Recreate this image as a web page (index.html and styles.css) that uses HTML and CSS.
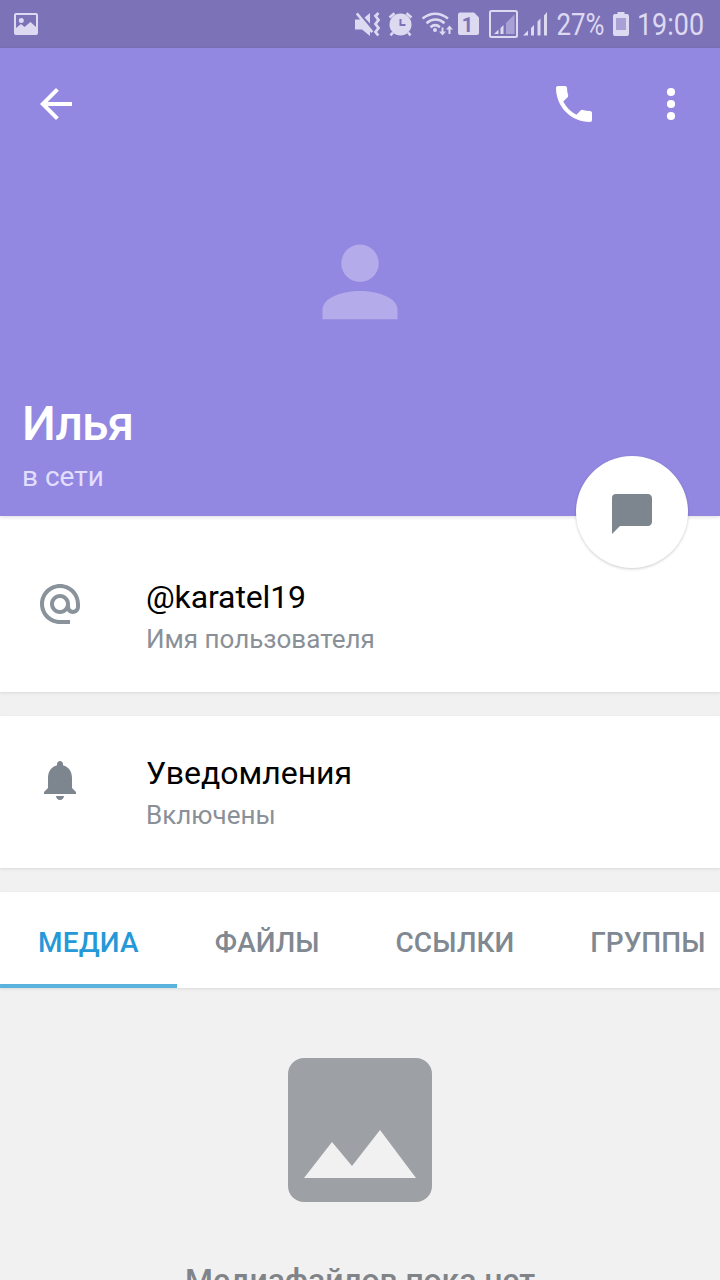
FILE: index.html
```html
<!DOCTYPE html>
<html lang="ru">
<head>
<meta charset="utf-8">
<title>Илья</title>
<link rel="stylesheet" href="styles.css">
</head>
<body>
<div class="screen">
  <div class="statusbar">
    <svg class="statusbar-icons" viewBox="0 0 720 48" width="720" height="48">
      <g fill="#ddd9f1">
        <path fill-rule="evenodd" d="M16 13h20a2 2 0 0 1 2 2v18a2 2 0 0 1-2 2H16a2 2 0 0 1-2-2V15a2 2 0 0 1 2-2zm0 2v13l5-4 3.500 3 6-5L36 27V15z"/>
        <circle cx="21.300" cy="20.500" r="2.500"/>
        <path d="M355 19.500h6.500l8.500 9.500v7l-8-6.500h-7zM364.500 17.500l5.500-4.500v10.500zM355.800 14.300l2-1.800 15.500 18.800-2 1.800z"/>
        <path d="M378.500 13l-3 3 3 4-3 4 3 4-3 4 2.800 3.500" fill="none" stroke="#ddd9f1" stroke-width="2.800"/>
        <path fill-rule="evenodd" d="M400.500 13.500a11 11 0 1 1 0 22 11 11 0 0 1 0-22zm-1 5.500v7h6v-2h-4v-5z"/>
        <path d="M389.500 17.500l5-4.200M411.500 17.500l-5-4.200M393 32.500l-2.500 2.800M408 32.500l2.500 2.800" fill="none" stroke="#ddd9f1" stroke-width="2.600"/>
        <g fill="none" stroke="#ddd9f1" stroke-width="2.500">
          <path d="M422.500 18.500c8-6.500 17.500-6.500 25.500 0M426.500 23.200c5.500-4.800 12.500-4.800 18 0M430.500 27.200c3-2.600 6.500-2.600 9.500 0"/>
        </g>
        <circle cx="435" cy="30" r="2"/>
        <path d="M441.500 27.500h2v4h2.500l-3.500 4-3.500-4h2.500zM448.500 34h2v-4.500h2.500l-3.500-4-3.500 4h2.500z"/>
        <path d="M460 12.500h14l5 5V33a2 2 0 0 1-2 2h-17a2 2 0 0 1-2-2V14.500a2 2 0 0 1 2-2z"/>
        <rect x="490" y="11" width="27" height="26" rx="1.500" fill="none" stroke="#ddd9f1" stroke-width="2"/>
        <path d="M494 34l4.500-4.500V34zM500.500 28l3-3v9h-3z"/>
        <path d="M506 23l8.500-8.500V34H506z" fill="#a9a1d6"/>
        <path d="M523 35.500l5-5v5zM531 28l3-3v10.500h-3zM537.500 21.500l3-3v17h-3zM544 15.500l3-3.500v23.500h-3z"/>
        <path fill-rule="evenodd" d="M617.500 12h7v2h2.500a2 2 0 0 1 2 2v18a2 2 0 0 1-2 2h-12a2 2 0 0 1-2-2V16a2 2 0 0 1 2-2h2.500z"/>
      </g>
      <path d="M616 18h10v12h-10z" fill="#a9a1d6"/>
      <text class="sim" x="467.500" y="32" text-anchor="middle">1</text>
      <text class="reading" x="556.500" y="35" textLength="48" lengthAdjust="spacingAndGlyphs">27%</text>
      <text class="reading" x="637" y="35" textLength="67" lengthAdjust="spacingAndGlyphs">19:00</text>
    </svg>
  </div>

  <header class="hero">
    <nav class="toolbar">
      <svg class="icon" viewBox="0 0 24 24"><path fill="#fff" d="M20 11H7.830l5.590-5.590L12 4l-8 8 8 8 1.410-1.410L7.830 13H20z"/></svg>
      <span class="spacer"></span>
      <svg class="icon" viewBox="0 0 24 24"><path fill="#fff" d="M6.620 10.790c1.440 2.830 3.760 5.140 6.590 6.590l2.200-2.200c.27-.27.67-.36 1.020-.24 1.120.37 2.330.57 3.570.57.55 0 1 .45 1 1V20c0 .55-.45 1-1 1-9.390 0-17-7.610-17-17 0-.55.45-1 1-1h3.500c.55 0 1 .45 1 1 0 1.250.2 2.450.57 3.570.11.35.03.74-.25 1.020l-2.200 2.200z"/></svg>
      <svg class="icon more" viewBox="0 0 48 48"><g fill="#fff"><circle cx="24" cy="12" r="4.100"/><circle cx="24" cy="24" r="4.100"/><circle cx="24" cy="36" r="4.100"/></g></svg>
    </nav>
    <svg class="avatar" viewBox="0 0 76 76"><g fill="#b4abea"><circle cx="38" cy="19.300" r="18.700"/><path d="M.5 75.300V65.500C.5 54 20 47 38 47s37.500 7 37.500 18.500v9.800z"/></g></svg>
    <div class="identity">
      <h1 class="name">Илья</h1>
      <p class="presence">в сети</p>
    </div>
    <button class="fab" aria-label="Написать">
      <svg class="icon" viewBox="0 0 24 24"><path fill="#7d868f" d="M20 2H4a2 2 0 0 0-2 2v18l4-4h14c1.100 0 2-.9 2-2V4c0-1.100-.9-2-2-2z"/></svg>
    </button>
  </header>

  <main>
    <section class="row row-first">
      <svg class="icon row-icon" viewBox="0 0 24 24"><path fill="#8a939b" d="M12 2C6.480 2 2 6.480 2 12s4.480 10 10 10h5v-2h-5c-4.340 0-8-3.660-8-8s3.660-8 8-8 8 3.660 8 8v1.430c0 .79-.71 1.570-1.500 1.570s-1.500-.78-1.500-1.570V12c0-2.760-2.240-5-5-5s-5 2.240-5 5 2.240 5 5 5c1.380 0 2.640-.56 3.540-1.470.65.89 1.770 1.470 2.960 1.470 1.970 0 3.500-1.600 3.500-3.570V12c0-5.520-4.480-10-10-10zm0 13c-1.660 0-3-1.340-3-3s1.340-3 3-3 3 1.340 3 3-1.340 3-3 3z"/></svg>
      <div>
        <p class="row-title handle">@karatel19</p>
        <p class="row-note">Имя пользователя</p>
      </div>
    </section>
    <section class="row">
      <svg class="icon row-icon" viewBox="0 0 24 24"><path fill="#7d868f" d="M12 22c1.100 0 2-.9 2-2h-4c0 1.100.9 2 2 2zM18 16v-5c0-3.070-1.640-5.640-4.500-6.320V4c0-.83-.67-1.500-1.500-1.500s-1.500.67-1.500 1.500v.68C7.630 5.360 6 7.920 6 11v5l-2 2v1h16v-1l-2-2z"/></svg>
      <div>
        <p class="row-title">Уведомления</p>
        <p class="row-note">Включены</p>
      </div>
    </section>
    <nav class="tabs">
      <a class="tab tab-active">МЕДИА</a>
      <a class="tab">ФАЙЛЫ</a>
      <a class="tab">ССЫЛКИ</a>
      <a class="tab">ГРУППЫ</a>
    </nav>
    <section class="empty">
      <svg class="empty-icon" viewBox="0 0 144 144"><rect width="144" height="144" rx="16" fill="#9da1a6"/><path d="M16 120l28-36 20 24 28-36 36 48z" fill="#f1f1f1"/></svg>
      <p class="empty-text">Медиафайлов пока нет</p>
    </section>
  </main>
</div>
</body>
</html>
```

FILE: styles.css
```css
* { box-sizing: border-box; }
html, body { margin: 0; overflow: hidden; }
body { font-family: Roboto, "Noto Sans", sans-serif; background: #f1f1f1; }
h1, p { margin: 0; font-weight: 400; white-space: nowrap; }
svg { display: block; flex: none; }

.screen { width: 720px; height: 1280px; overflow: hidden; background: #f1f1f1; }
.statusbar { height: 48px; background: #7c72b8; }
.reading { font-size: 31px; fill: #ddd9f1; }
.sim { font-size: 20px; font-weight: 700; fill: #7c72b8; }

.hero {
  position: relative;
  z-index: 1;
  display: flex;
  flex-direction: column;
  height: 468px;
  background: #9388e1;
  box-shadow: 0 1px 4px rgba(0, 0, 0, .14);
}
.toolbar { display: flex; align-items: center; height: 112px; padding: 0 25px 0 32px; }
.icon { width: 48px; height: 48px; }
.spacer { flex: 1; }
.more { margin-left: 49px; }
.avatar { width: 76px; height: 76px; margin: 84px auto 0; }
.identity { display: flex; flex-direction: column; gap: 9px; margin-top: auto; padding: 0 0 23px 22px; }
.name { font-size: 48px; line-height: 56px; font-weight: 500; letter-spacing: -.9px; color: #fff; }
.presence { font-size: 28px; line-height: 32px; color: #e2deff; }
.fab {
  position: absolute;
  right: 32px;
  bottom: -52px;
  display: grid;
  place-items: center;
  width: 112px;
  height: 112px;
  padding: 0;
  border: 0;
  border-radius: 50%;
  background: #fff;
  box-shadow: 0 1px 3px rgba(0, 0, 0, .2);
}
.fab .icon { margin-top: 4px; }

.row {
  display: flex;
  gap: 62px;
  height: 152px;
  margin-bottom: 24px;
  padding: 38px 0 0 36px;
  background: #fff;
  box-shadow: 0 1px 3px rgba(0, 0, 0, .1);
}
.row-first { height: 176px; padding-top: 62px; }
.row-icon { margin-top: 2px; }
.row-title { font-size: 32px; line-height: 38px; color: #000; }
.handle { letter-spacing: -.12px; }
.row-note { margin-top: 8px; font-size: 26px; line-height: 30px; color: #8a9097; }

.tabs { display: flex; height: 96px; background: #fff; box-shadow: 0 1px 3px rgba(0, 0, 0, .1); }
.tab { flex: none; padding: 0 38px; font-size: 28px; font-weight: 500; line-height: 101px; color: #808891; }
.tab-active { height: 96px; letter-spacing: .2px; color: #2599d8; border-bottom: 4px solid #59b3dd; }

.empty { display: flex; flex-direction: column; align-items: center; padding-top: 70px; }
.empty-icon { width: 144px; height: 144px; }
.empty-text { margin-top: 58px; font-size: 32px; line-height: 40px; font-weight: 500; letter-spacing: -.12px; color: #808489; }
```
